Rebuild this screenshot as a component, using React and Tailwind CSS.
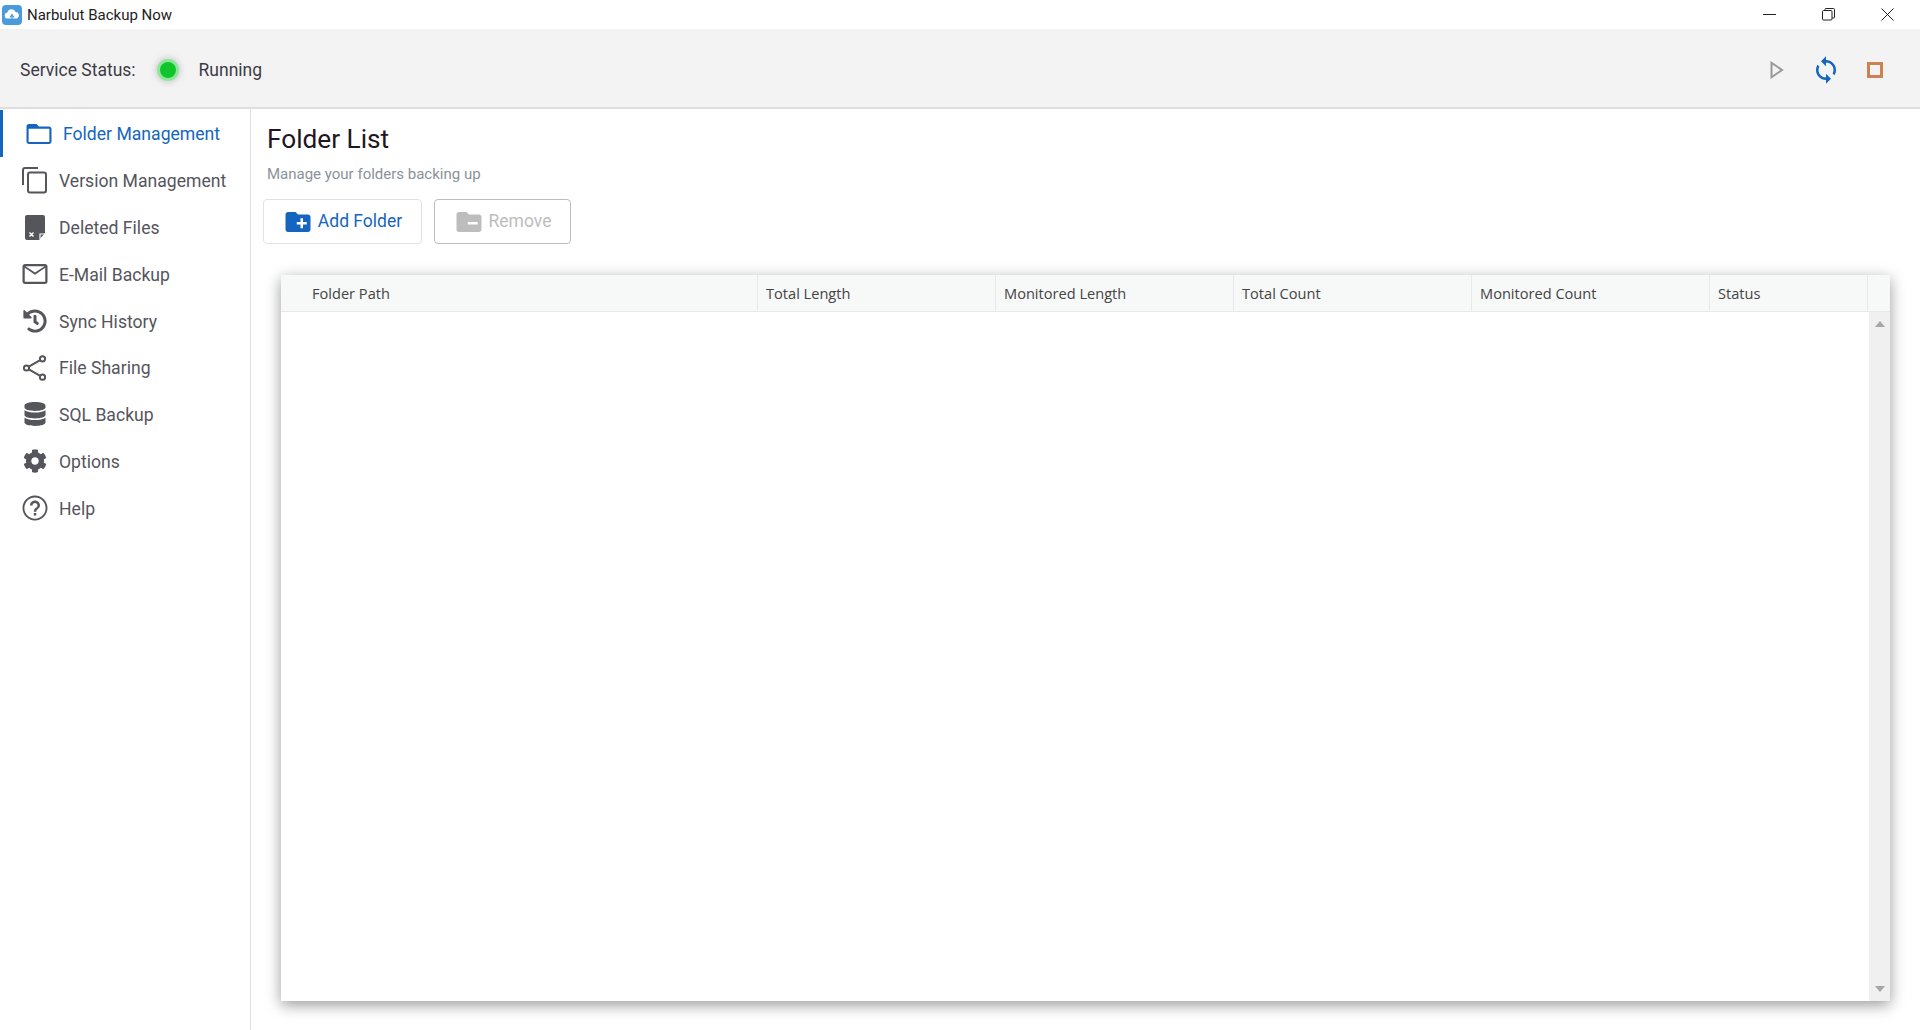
import React from 'react';
import { FaHistory, FaCog, FaDatabase } from 'react-icons/fa';

const AppIcon = () => (
  <svg width="20" height="20" viewBox="0 0 20 20">
    <rect width="20" height="20" rx="4" fill="#4a9bdc" />
    <path d="M5 13.5a3 3 0 0 1 .3-5.9 4.4 4.4 0 0 1 8.300-.7 3.400 3.400 0 0 1 1 6.600z" fill="#fff" />
    <path d="M8 12.5l2-3 2 3M10 10v5" stroke="#4a9bdc" strokeWidth="1.2" fill="none" />
  </svg>
);

const MatIcon = ({ d, size = 30, className = "" }) => (
  <svg width={size} height={size} viewBox="0 0 24 24" fill="currentColor" className={className}>
    <path d={d} />
  </svg>
);

const FolderIcon = () => (
  <MatIcon size={30} d="M20 6h-8l-2-2H4c-1.1 0-1.99.9-1.99 2L2 18c0 1.1.9 2 2 2h16c1.1 0 2-.9 2-2V8c0-1.1-.9-2-2-2zm.3 12.3H3.7V7.7h16.6z" />
);

const CopyIcon = () => (
  <svg width="28" height="28" viewBox="0 0 28 28" fill="none" stroke="currentColor" strokeWidth="2">
    <path d="M2 19V4a2 2 0 0 1 2-2h13" />
    <rect x="7" y="6.5" width="18" height="20" rx="2" />
  </svg>
);

const DeletedIcon = () => (
  <svg width="20" height="25" viewBox="0 0 20 25">
    <path d="M2 0h16a2 2 0 0 1 2 2v16l-6 7H2a2 2 0 0 1-2-2V2a2 2 0 0 1 2-2z" fill="currentColor" />
    <path d="M4.5 17.5l4 4M8.5 17.5l-4 4" stroke="#fff" strokeWidth="1.5" />
    <path d="M15 24v-5h5" stroke="#fff" strokeWidth="1.2" fill="none" />
  </svg>
);

const MailIcon = () => (
  <MatIcon size={30} d="M20 4H4c-1.1 0-1.99.9-1.99 2L2 18c0 1.1.9 2 2 2h16c1.1 0 2-.9 2-2V6c0-1.1-.9-2-2-2zm.2 14.2H3.8V7l8.2 5.6L20.200 7zM12 10.800 4.300 5.800h15.400z" />
);

const ShareIcon = () => (
  <svg width="26" height="26" viewBox="0 0 26 26" fill="none" stroke="currentColor" strokeWidth="2">
    <circle cx="4.500" cy="13" r="2.600" />
    <circle cx="20.500" cy="3.800" r="2.600" />
    <circle cx="20.500" cy="22.200" r="2.600" />
    <path d="M6.800 11.700l11.400-6.600M6.800 14.300l11.400 6.600" />
  </svg>
);

const HelpIcon = () => (
  <MatIcon size={30} d="M11 18h2v-2h-2v2zm1-16C6.480 2 2 6.480 2 12s4.480 10 10 10 10-4.480 10-10S17.520 2 12 2zm0 18.500c-4.700 0-8.500-3.800-8.500-8.500S7.300 3.500 12 3.500s8.500 3.800 8.500 8.500-3.800 8.500-8.500 8.500zM12 6c-2.210 0-4 1.790-4 4h2c0-1.100.9-2 2-2s2 .9 2 2c0 2-3 1.750-3 5h2c0-2.250 3-2.500 3-5 0-2.210-1.790-4-4-4z" />
);

const navItems = [
  { label: "Version Management", icon: <CopyIcon /> },
  { label: "Deleted Files", icon: <DeletedIcon /> },
  { label: "E-Mail Backup", icon: <MailIcon /> },
  { label: "Sync History", icon: <FaHistory size={24} /> },
  { label: "File Sharing", icon: <ShareIcon /> },
  { label: "SQL Backup", icon: <FaDatabase size={24} /> },
  { label: "Options", icon: <FaCog size={24} /> },
  { label: "Help", icon: <HelpIcon /> },
];

const columns = [
  { label: "Folder Path", className: "w-[477px] pl-[31px]" },
  { label: "Total Length", className: "w-[238px] pl-[8px]" },
  { label: "Monitored Length", className: "w-[238px] pl-[8px]" },
  { label: "Total Count", className: "w-[238px] pl-[8px]" },
  { label: "Monitored Count", className: "w-[238px] pl-[8px]" },
  { label: "Status", className: "w-[158px] pl-[8px]" },
];

export default function App() {
  return (
    <div className="h-[1030px] w-full overflow-hidden flex flex-col bg-white font-['Roboto',sans-serif] text-[#333]">
      {/* Title bar */}
      <div className="h-[29px] flex items-center justify-between shrink-0">
        <div className="flex items-center gap-[5px] pl-[2px]">
          <AppIcon />
          <span className="text-[15px] text-[#222] pt-[1px]">Narbulut Backup Now</span>
        </div>
        <div className="flex items-center text-[#222] pr-[3px]">
          <div className="w-[59px] flex justify-center">
            <svg width="13" height="13" viewBox="0 0 13 13"><path d="M0 6.500h13" stroke="currentColor" /></svg>
          </div>
          <div className="w-[59px] flex justify-center">
            <svg width="13" height="13" viewBox="0 0 13 13" fill="none" stroke="currentColor">
              <rect x="0.500" y="2.500" width="9.500" height="9.500" rx="1" />
              <path d="M3 2.500V1.500a1 1 0 0 1 1-1h7.500a1 1 0 0 1 1 1V9a1 1 0 0 1-1 1H10" />
            </svg>
          </div>
          <div className="w-[59px] flex justify-center">
            <svg width="13" height="13" viewBox="0 0 13 13" stroke="currentColor"><path d="M0.500 0.500l12 12M12.500 0.500l-12 12" /></svg>
          </div>
        </div>
      </div>

      {/* Status bar */}
      <div className="h-[80px] shrink-0 bg-[#f3f3f3] border-b-2 border-[#dedede] flex items-center justify-between pt-[3px]">
        <div className="flex items-center pl-[20px] text-[17.500px] text-[#3c3c46]">
          <span className="pt-[2px]">Service Status:</span>
          <span className="ml-[24px] mr-[23px] w-[16px] h-[16px] rounded-full bg-[#12c42c] shadow-[0_0_0_3px_#8be89a,0_0_6px_4px_rgba(120,120,120,0.35)]" />
          <span className="pt-[2px]">Running</span>
        </div>
        <div className="flex items-center pr-[37px]">
          <svg width="14" height="18" viewBox="0 0 14 18" fill="none" stroke="#999" strokeWidth="2"><path d="M1.500 1.800L12 9 1.500 16.200z" /></svg>
          <svg width="30" height="30" viewBox="0 0 24 24" fill="#1565c0" className="ml-[27px] mr-[26px]">
            <path d="M12 4V1L8 5l4 4V6c3.310 0 6 2.690 6 6 0 1.010-.25 1.970-.7 2.800l1.460 1.460C19.540 15.030 20 13.570 20 12c0-4.420-3.580-8-8-8zm0 14c-3.310 0-6-2.690-6-6 0-1.010.25-1.970.7-2.800L5.240 7.740C4.460 8.970 4 10.430 4 12c0 4.420 3.580 8 8 8v3l4-4-4-4v3z" />
          </svg>
          <div className="w-[16px] h-[16px] border-[3px] border-[#cc8350]" />
        </div>
      </div>

      <div className="flex-1 flex min-h-0">
        {/* Sidebar */}
        <nav className="w-[251px] shrink-0 border-r border-[#dedede] pt-[1px]">
          <div className="h-[47px] flex items-center border-l-[3px] border-[#1565c0] text-[#1565c0] pl-[21px] text-[17.600px] font-[450]">
            <span className="w-[30px] flex justify-center"><FolderIcon /></span>
            <span className="ml-[9px] pt-[2px]">Folder Management</span>
          </div>
          {navItems.map((item) => (
            <div key={item.label} className="h-[46.800px] flex items-center pl-[20px] text-[#55555c] text-[17.600px] font-[450]">
              <span className="w-[30px] flex justify-center">{item.icon}</span>
              <span className="ml-[9px] pt-[2px]">{item.label}</span>
            </div>
          ))}
        </nav>

        {/* Main */}
        <main className="flex-1 min-w-0 flex flex-col pl-[12px] pr-[30px] pb-[29px]">
          <h1 className="mt-[14px] ml-[4px] text-[26.200px] leading-[32px] text-[#1e1620]">Folder List</h1>
          <p className="mt-[10px] ml-[4px] text-[15px] leading-[18px] text-[#8a929a]">Manage your folders backing up</p>
          <div className="mt-[16px] flex gap-[12px]">
            <button className="w-[159px] h-[45px] rounded-[4px] border border-[#e2e2e2] flex items-center justify-center gap-[5px] text-[#1565c0] text-[17.500px] font-[450]">
              <MatIcon size={30} d="M20 6h-8l-2-2H4c-1.110 0-1.990.89-1.990 2L2 18c0 1.110.89 2 2 2h16c1.110 0 2-.89 2-2V8c0-1.110-.89-2-2-2zm-1 8h-3v3h-2v-3h-3v-2h3V9h2v3h3v2z" />
              Add Folder
            </button>
            <button className="w-[137px] h-[45px] rounded-[4px] border border-[#bdbdbd] flex items-center justify-center gap-[5px] text-[#bdbdbd] text-[17.500px] font-[450]">
              <MatIcon size={30} d="M20 6h-8l-2-2H4c-1.110 0-1.990.89-1.990 2L2 18c0 1.110.89 2 2 2h16c1.110 0 2-.89 2-2V8c0-1.110-.89-2-2-2zm-1 8h-8v-2h8v2z" />
              Remove
            </button>
          </div>

          {/* Table */}
          <div className="mt-[31px] ml-[18px] flex-1 min-h-0 flex flex-col shadow-[0_4px_14px_rgba(0,0,0,0.4)]">
            <div className="h-[37px] shrink-0 flex bg-[#f7f8f8] border-b border-[#e8e8e8] font-['Open_Sans',sans-serif] text-[14.600px] text-[#444]">
              {columns.map((col) => (
                <div key={col.label} className={`${col.className} border-r border-[#e8e8e8] flex items-center pt-[1px]`}>
                  {col.label}
                </div>
              ))}
            </div>
            <div className="flex-1 min-h-0 flex justify-end">
              <div className="w-[21px] bg-[#f0f0f0] flex flex-col items-center justify-between py-[9px]">
                <svg width="10" height="6" viewBox="0 0 10 6"><path d="M5 0l5 6H0z" fill="#a6a6a6" /></svg>
                <svg width="10" height="6" viewBox="0 0 10 6"><path d="M0 0h10L5 6z" fill="#a6a6a6" /></svg>
              </div>
            </div>
          </div>
        </main>
      </div>
    </div>
  );
}
